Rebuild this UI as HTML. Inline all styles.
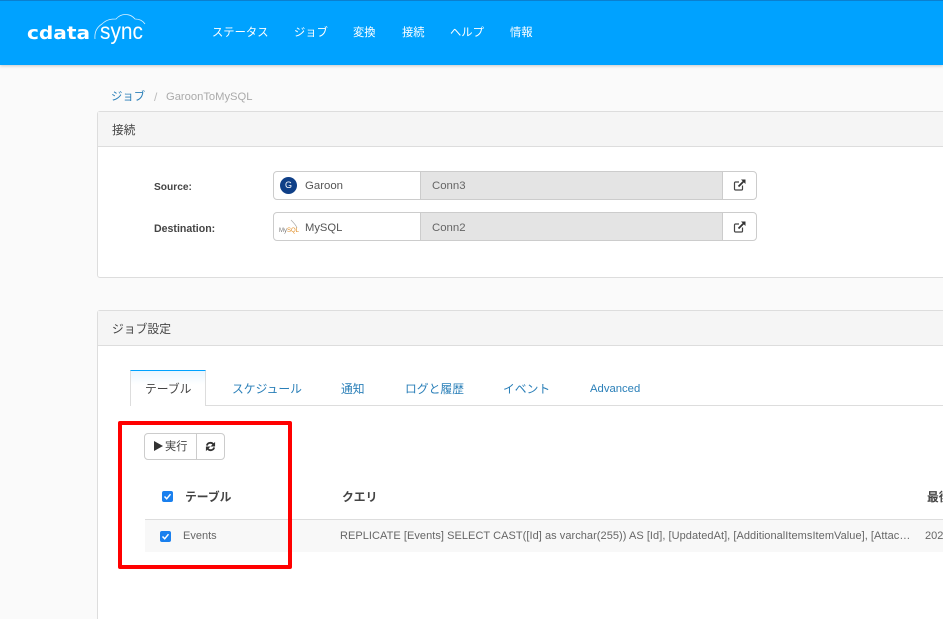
<!DOCTYPE html>
<html lang="ja">
<head>
<meta charset="utf-8">
<style>
html,body{margin:0;padding:0;width:943px;height:619px;overflow:hidden;background:#fafafa;}
body{position:relative;font-family:"Liberation Sans","Noto Sans CJK JP",sans-serif;color:#555;font-size:12px;}
.a{position:absolute;white-space:nowrap;}
.nav{top:0;height:65px;line-height:67px;color:#fff;font-size:11.3px;}
.panel{position:absolute;left:97px;width:860px;background:#fff;border:1px solid #ddd;border-radius:3px;box-sizing:border-box;}
.phead{position:absolute;left:0;right:0;top:0;height:34px;background:#f5f5f5;border-bottom:1px solid #ddd;}
.box{position:absolute;box-sizing:border-box;border:1px solid #ccc;background:#fff;}
.tab{top:381px;color:#2a7fb8;font-size:11.8px;line-height:16px;}
.cb{position:absolute;width:11px;height:11px;background:#1a80ee;border-radius:2px;}
</style>
</head>
<body>
<div class="a" style="left:0;top:0;width:943px;height:65px;background:#00a2ff;border-top:1px solid #0a7fd0;box-sizing:border-box;box-shadow:0 1px 3px rgba(0,0,0,.2)"></div>
<svg class="a" style="left:24px;top:10px" width="125" height="40" viewBox="0 0 125 40">
<path d="M71 29Q70 19 78 14C83 9 88 9 92 9C97 3 106 3 111 9C116 9 119 11 121 14" fill="none" stroke="#fff" stroke-width=".8" opacity=".85"/>
<text x="3" y="29" font-family="DejaVu Sans" font-size="18" font-weight="700" fill="#fff" textLength="63" lengthAdjust="spacingAndGlyphs">cdata</text>
<text x="76" y="29" font-family="Liberation Sans" font-size="23" fill="#fff" textLength="43" lengthAdjust="spacingAndGlyphs">sync</text>
</svg>
<div class="a nav" style="left:212px">ステータス</div>
<div class="a nav" style="left:294px">ジョブ</div>
<div class="a nav" style="left:353px">変換</div>
<div class="a nav" style="left:402px">接続</div>
<div class="a nav" style="left:450px">ヘルプ</div>
<div class="a nav" style="left:510px">情報</div>

<div class="a" style="left:111px;top:89px;font-size:11.4px;line-height:16px;color:#2a7fb8">ジョブ</div>
<div class="a" style="left:154px;top:89px;font-size:12px;line-height:16px;color:#bbb">/</div>
<div class="a" style="left:166px;top:89px;font-size:11.2px;line-height:16px;color:#aaa">GaroonToMySQL</div>

<div class="panel" style="top:111px;height:167px">
  <div class="phead"></div>
  <div class="a" style="left:14px;top:11px;font-size:11.7px;line-height:16px;color:#444">接続</div>
</div>
<div class="a" style="left:154px;top:181px;font-size:10.2px;font-weight:700;line-height:14px;color:#444">Source:</div>
<div class="a" style="left:154px;top:222px;font-size:10.6px;font-weight:700;line-height:14px;color:#444">Destination:</div>

<div class="box" style="left:273px;top:171px;width:484px;height:29px;border-radius:4px"></div>
<div class="box" style="left:420px;top:171px;width:303px;height:29px;background:#e4e4e4"></div>
<div class="a" style="left:280px;top:177px;width:17px;height:17px;border-radius:50%;background:#0f3f87;color:#fff;font-size:9px;line-height:17px;text-align:center">G</div>
<div class="a" style="left:305px;top:179px;font-size:11.4px;line-height:15px;color:#555">Garoon</div>
<div class="a" style="left:432px;top:179px;font-size:11.4px;line-height:15px;color:#666">Conn3</div>
<svg class="a" style="left:733px;top:178px" width="14" height="14" viewBox="0 0 14 14"><path d="M9.500 7.500V11a1 1 0 0 1-1 1H2.500a1 1 0 0 1-1-1V5a1 1 0 0 1 1-1H6" fill="none" stroke="#444" stroke-width="1.200"/><path d="M5.500 8.500L10.500 3.500" stroke="#333" stroke-width="1.800"/><path d="M8 1.500H12.500V6Z" fill="#333"/></svg>

<div class="box" style="left:273px;top:212px;width:484px;height:29px;border-radius:4px"></div>
<div class="box" style="left:420px;top:212px;width:303px;height:29px;background:#e4e4e4"></div>
<svg class="a" style="left:278px;top:219px" width="22" height="18" viewBox="0 0 22 18"><path d="M13 1C15 3 18 6 19 9" fill="none" stroke="#aaa" stroke-width=".7"/><text x="1" y="13" font-family="Liberation Sans" font-size="6" fill="#777">My<tspan fill="#e08a1e">SQL</tspan></text></svg>
<div class="a" style="left:305px;top:221px;font-size:11.2px;line-height:15px;color:#555">MySQL</div>
<div class="a" style="left:432px;top:221px;font-size:11.4px;line-height:15px;color:#666">Conn2</div>
<svg class="a" style="left:733px;top:220px" width="14" height="14" viewBox="0 0 14 14"><path d="M9.500 7.500V11a1 1 0 0 1-1 1H2.500a1 1 0 0 1-1-1V5a1 1 0 0 1 1-1H6" fill="none" stroke="#444" stroke-width="1.200"/><path d="M5.500 8.500L10.500 3.500" stroke="#333" stroke-width="1.800"/><path d="M8 1.500H12.500V6Z" fill="#333"/></svg>

<div class="panel" style="top:310px;height:330px">
  <div class="phead"></div>
  <div class="a" style="left:14px;top:10px;font-size:11.8px;line-height:16px;color:#444">ジョブ設定</div>
</div>

<div class="a" style="left:130px;top:405px;width:813px;height:1px;background:#ddd"></div>
<div class="a" style="left:130px;top:370px;width:76px;height:36px;box-sizing:border-box;background:linear-gradient(#eaf6ff,#fff 14px);border:1px solid #ddd;border-top:1px solid #00a2ff;border-bottom:0"></div>
<div class="a tab" style="left:145px;color:#444">テーブル</div>
<div class="a tab" style="left:232px">スケジュール</div>
<div class="a tab" style="left:341px">通知</div>
<div class="a tab" style="left:405px">ログと履歴</div>
<div class="a tab" style="left:503px">イベント</div>
<div class="a tab" style="left:590px;font-size:11.300px">Advanced</div>

<div class="box" style="left:144px;top:433px;width:81px;height:27px;border-radius:4px"></div>
<div class="a" style="left:196px;top:433px;width:1px;height:27px;background:#ccc"></div>
<div class="a" style="left:154px;top:441px;width:0;height:0;border-left:9px solid #333;border-top:5px solid transparent;border-bottom:5px solid transparent"></div>
<div class="a" style="left:165px;top:439px;font-size:11.200px;line-height:16px;color:#444">実行</div>
<svg class="a" style="left:205px;top:441px" width="11" height="11" viewBox="0 0 12 12"><path d="M2 5A4 4 0 0 1 9 3.500M10 7A4 4 0 0 1 3 8.500" fill="none" stroke="#333" stroke-width="2"/><path d="M11 1V6H6ZM1 11V6H6Z" fill="#333"/></svg>

<div class="cb" style="left:162px;top:491px"></div>
<svg class="a" style="left:162px;top:491px" width="11" height="11"><path d="M2.500 5.500L4.700 7.800L8.500 3.200" fill="none" stroke="#fff" stroke-width="1.500"/></svg>
<div class="a" style="left:185px;top:489px;font-size:11.800px;font-weight:700;line-height:16px;color:#444">テーブル</div>
<div class="a" style="left:342px;top:489px;font-size:11.800px;font-weight:700;line-height:16px;color:#444">クエリ</div>
<div class="a" style="left:927px;top:489px;font-size:11.800px;font-weight:700;line-height:16px;color:#444">最後</div>

<div class="a" style="left:145px;top:519px;width:798px;height:33px;background:#f8f8f8;border-top:1px solid #ddd;box-sizing:border-box"></div>
<div class="cb" style="left:160px;top:531px"></div>
<svg class="a" style="left:160px;top:531px" width="11" height="11"><path d="M2.500 5.500L4.700 7.800L8.500 3.200" fill="none" stroke="#fff" stroke-width="1.500"/></svg>
<div class="a" style="left:183px;top:529px;font-size:11px;line-height:15px;color:#666">Events</div>
<div class="a" style="left:340px;top:529px;font-size:11px;line-height:15px;letter-spacing:.05px;color:#666;width:576px;overflow:hidden">REPLICATE [Events] SELECT CAST([Id] as varchar(255)) AS [Id], [UpdatedAt], [AdditionalItemsItemValue], [Attac…</div>
<div class="a" style="left:925px;top:529px;font-size:11px;line-height:15px;color:#666">2021</div>

<div class="a" style="left:118px;top:421px;width:174px;height:148px;box-sizing:border-box;border:4px solid #f00;border-radius:2px"></div>
</body>
</html>
